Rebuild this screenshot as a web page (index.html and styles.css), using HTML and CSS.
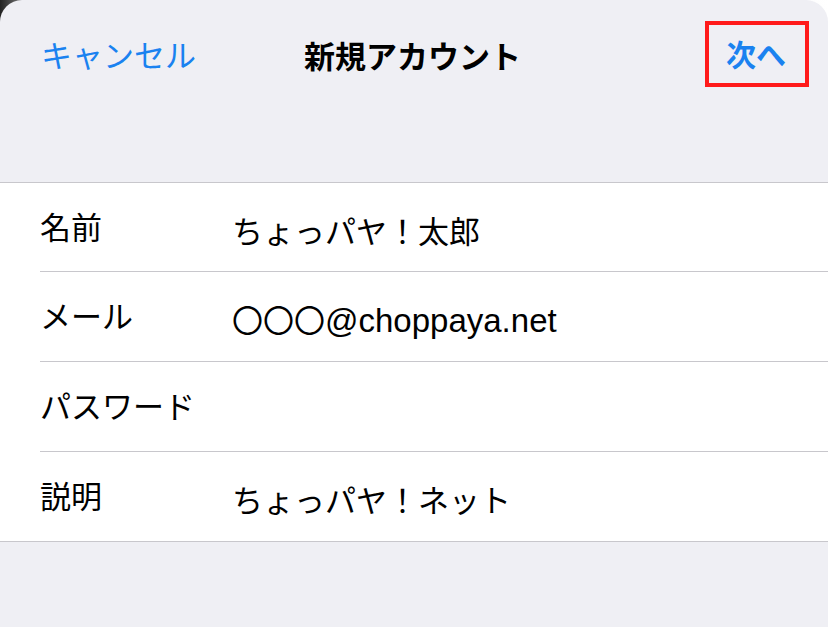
FILE: index.html
```html
<!DOCTYPE html>
<html lang="ja">
<head>
    <meta charset="UTF-8">
    <meta name="viewport" content="width=device-width, initial-scale=1.0">
    <title>新規アカウント</title>
    <link rel="stylesheet" href="styles.css">
</head>
<body>
    <div class="sheet">
        <div class="navbar">
            <span class="nav-btn cancel">キャンセル</span>
            <span class="nav-title">新規アカウント</span>
            <span class="nav-btn next">次へ</span>
        </div>

        <div class="form">
            <div class="row">
                <span class="label">名前</span>
                <span class="value">ちょっパヤ！太郎</span>
            </div>
            <div class="row">
                <span class="label">メール</span>
                <span class="value">〇〇〇<span class="latin">@choppaya.net</span></span>
            </div>
            <div class="row">
                <span class="label">パスワード</span>
                <span class="value"></span>
            </div>
            <div class="row">
                <span class="label">説明</span>
                <span class="value">ちょっパヤ！ネット</span>
            </div>
        </div>
    </div>
</body>
</html>
```

FILE: styles.css
```css
html, body { margin: 0; height: 100%; }
body {
    background: linear-gradient(to right, #222 0, #bbb 40px, #fff 100%);
    font-family: "Noto Sans CJK JP", "Noto Sans", sans-serif;
    overflow: hidden;
}
.sheet {
    background: #efeff4;
    border-radius: 22px 22px 0 0;
    height: 100%;
}
.navbar {
    display: flex;
    align-items: center;
    justify-content: space-between;
    height: 110px;
    padding: 0 19px 0 41px;
    margin-bottom: 72px;
    position: relative;
}
.nav-btn { font-size: 31px; color: #1a82f0; line-height: 1; }
.cancel { margin-top: -4px; }
.next {
    font-weight: bold;
    font-size: 30px;
    border: 4px solid #ff1a1a;
    padding: 13px 19px 15px 17px;
    margin-top: -2px;
}
.nav-title {
    position: absolute;
    left: 304px;
    top: 39px;
    font-size: 31px;
    font-weight: bold;
    color: #000;
    line-height: 1;
}
.form {
    background: #fff;
    border-top: 1px solid #c8c7cc;
    border-bottom: 1px solid #c8c7cc;
    padding-left: 40px;
}
.row {
    display: flex;
    align-items: center;
    height: 89px;
    border-bottom: 1px solid #c8c7cc;
    font-size: 31px;
    color: #000;
}
.row:first-child { height: 88px; }
.row:last-child { border-bottom: none; }
.label { width: 192px; flex: none; margin-top: -4px; }
.value { font-size: 31px; margin-top: 4px; }
.latin { font-family: "Liberation Sans", "Noto Sans CJK JP", sans-serif; font-size: 33px; }
```
